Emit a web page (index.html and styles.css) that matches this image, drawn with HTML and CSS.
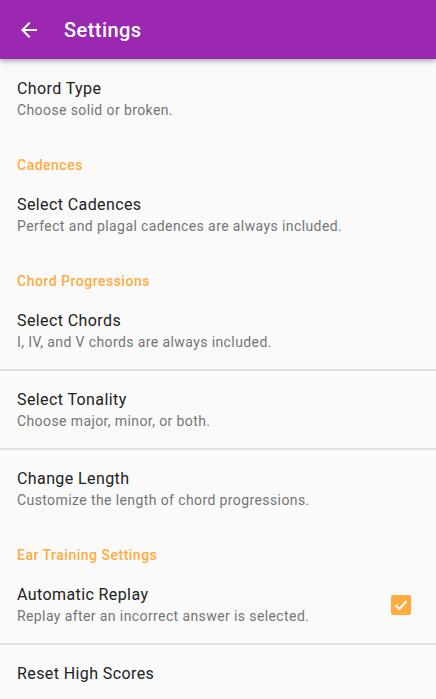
FILE: index.html
```html
<!DOCTYPE html>
<html>
<head>
<meta charset="utf-8">
<link rel="stylesheet" href="styles.css">
</head>
<body>
<header class="appbar">
  <svg class="back" width="24" height="24" viewBox="0 0 24 24"><path d="M20 11H7.83l5.59-5.59L12 4l-8 8 8 8 1.41-1.41L7.83 13H20v-2z" fill="#fff"/></svg>
  <h1 class="title">Settings</h1>
</header>
<main class="list">
  <div class="pref first">
    <div class="pref-text"><div class="pref-title">Chord Type</div><div class="pref-sum">Choose solid or broken.</div></div>
  </div>
  <div class="cat">Cadences</div>
  <div class="pref">
    <div class="pref-text"><div class="pref-title">Select Cadences</div><div class="pref-sum">Perfect and plagal cadences are always included.</div></div>
  </div>
  <div class="cat">Chord Progressions</div>
  <div class="pref div">
    <div class="pref-text"><div class="pref-title">Select Chords</div><div class="pref-sum">I, IV, and V chords are always included.</div></div>
  </div>
  <div class="pref div">
    <div class="pref-text"><div class="pref-title">Select Tonality</div><div class="pref-sum">Choose major, minor, or both.</div></div>
  </div>
  <div class="pref">
    <div class="pref-text"><div class="pref-title">Change Length</div><div class="pref-sum">Customize the length of chord progressions.</div></div>
  </div>
  <div class="cat">Ear Training Settings</div>
  <div class="pref div">
    <div class="pref-text"><div class="pref-title">Automatic Replay</div><div class="pref-sum">Replay after an incorrect answer is selected.</div></div>
    <span class="check"><svg width="14" height="12" viewBox="0 0 14 12"><path d="M1.5 6.2l3.8 3.8L12.5 2.2" fill="none" stroke="#fff" stroke-width="2"/></svg></span>
  </div>
  <div class="pref">
    <div class="pref-text"><div class="pref-title">Reset High Scores</div></div>
  </div>
</main>
</body>
</html>
```
FILE: styles.css
```css
* { box-sizing: border-box; }
html, body { margin: 0; padding: 0; }
body {
  background: #fafafa;
  font-family: Roboto, "Noto Sans", sans-serif;
  width: 436px;
  height: 699px;
  overflow: hidden;
}
.appbar {
  height: 59px;
  background: #9c27b0;
  display: flex;
  align-items: center;
  padding-left: 17px;
  box-shadow: 0 2px 4px rgba(0,0,0,0.25), 0 4px 6px rgba(0,0,0,0.08);
  position: relative;
  z-index: 1;
}
.back { display: block; margin-top: 1px; }
.title {
  margin: 0 0 0 23px;
  color: #fff;
  font-size: 20px;
  font-weight: 500;
  letter-spacing: 0.45px;
}
.list { display: flex; flex-direction: column; }
.pref {
  display: flex;
  align-items: center;
  padding: 18px 24px 18px 17px;
}
.pref.first { padding-top: 19px; }
.pref.div { border-bottom: 2px solid #e0e0e0; padding-bottom: 17px; }
.pref-text { flex: 1; }
.pref-title {
  font-size: 16px;
  line-height: 22px;
  color: #212121;
  letter-spacing: 0.4px;
}
.pref-sum {
  font-size: 14px;
  line-height: 20px;
  color: #757575;
  letter-spacing: 0.4px;
}
.cat {
  padding: 17px 17px 1px;
  font-size: 14px;
  line-height: 20px;
  font-weight: 500;
  color: #ffab40;
  letter-spacing: 0.5px;
}
.check {
  width: 20px;
  height: 20px;
  border-radius: 2px;
  background: #ffab40;
  display: flex;
  align-items: center;
  justify-content: center;
  margin-right: 1px;
}
```
